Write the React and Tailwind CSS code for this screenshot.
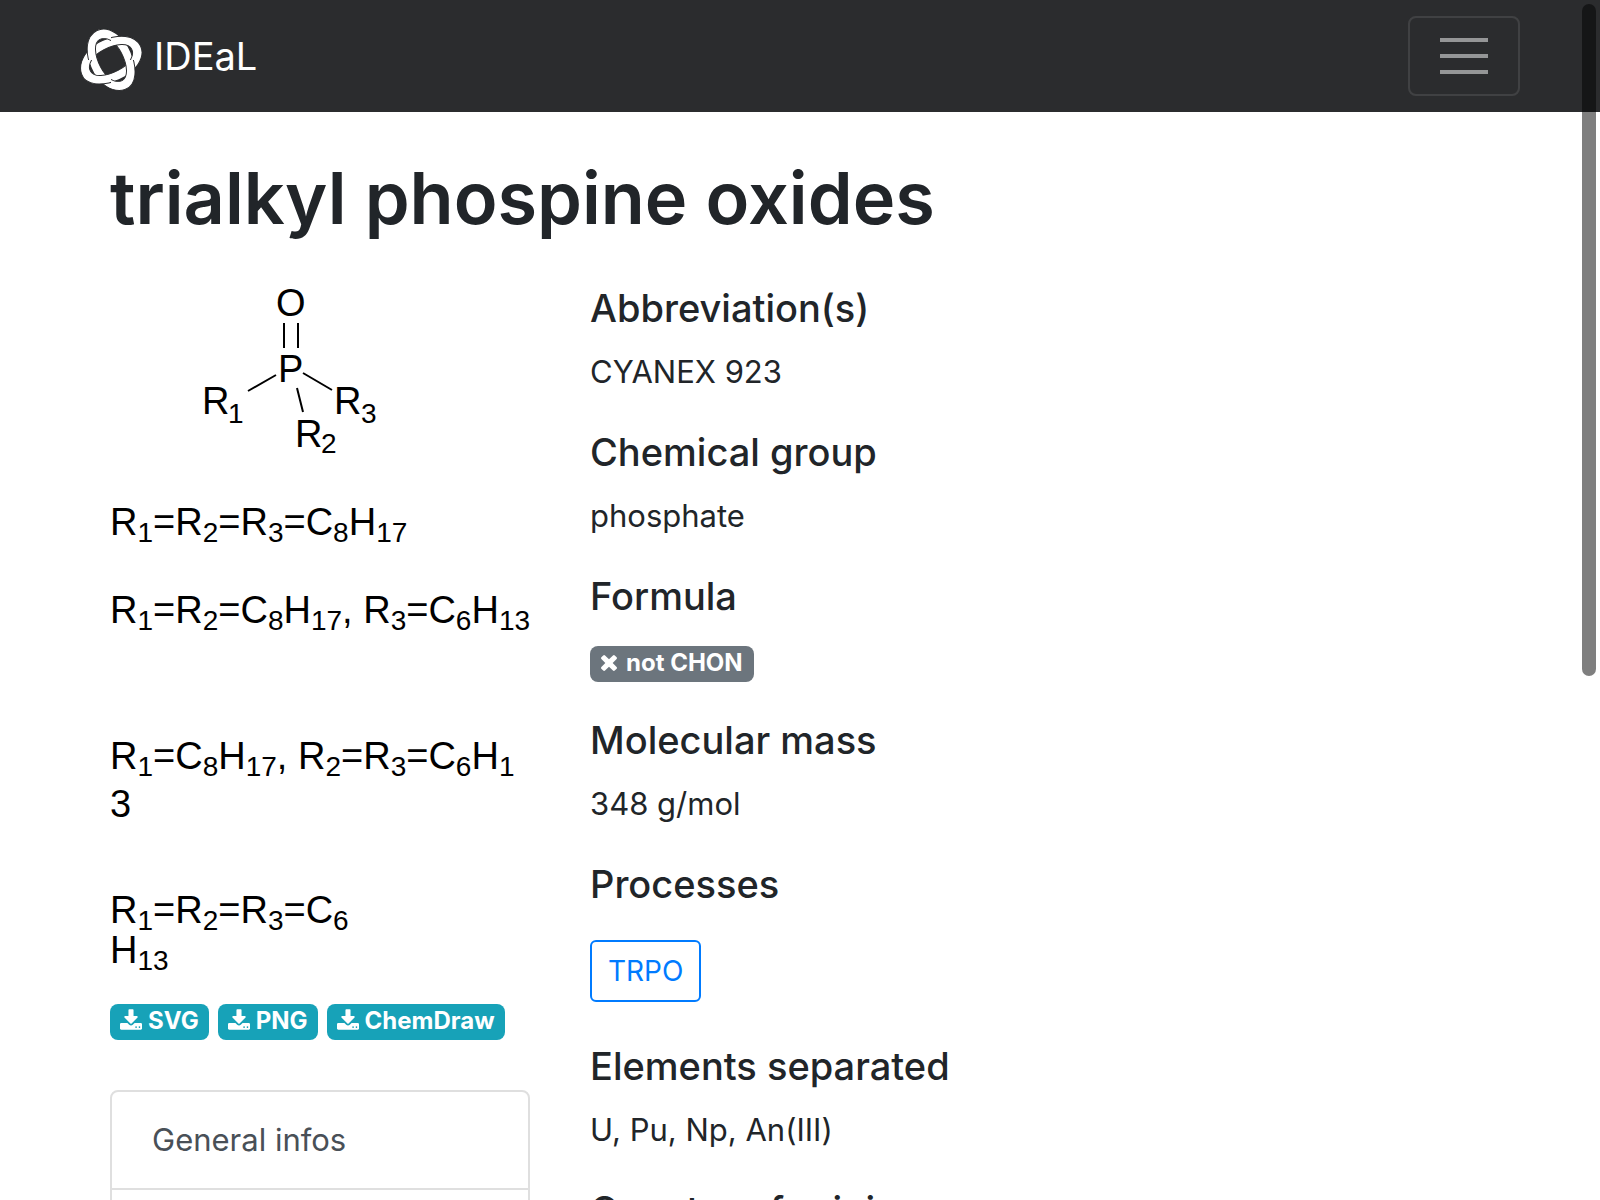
import React from "react";

const RING =
  "M-6-101C34-104 66-52 66 0S46 104 6 101S-66 52-66 0S-46-98-6-101Z" +
  "M-8-72C-30-70-42-34-38 8S-14 74 8 72S42 34 38-8S14-74-8-72Z";

function Logo() {
  return (
    <svg viewBox="-96 -99 192 198" className="mt-2 h-16 w-[62px]" aria-hidden="true">
      <defs>
        <clipPath id="weave">
          <rect x="-100" y="-100" width="100" height="100" />
          <rect x="0" y="0" width="100" height="100" />
        </clipPath>
      </defs>
      <g fill="#fff" stroke="#2b2c2e" strokeWidth="3" fillRule="evenodd">
        <path d={RING} transform="rotate(-22)" />
        <path d={RING} transform="rotate(68)" />
        <g clipPath="url(#weave)">
          <path d={RING} transform="rotate(-22)" />
        </g>
      </g>
    </svg>
  );
}

function DownloadIcon() {
  return (
    <svg viewBox="0 0 1664 1536" className="mb-[3px] h-[21px] w-[22px] shrink-0" fill="currentColor" aria-hidden="true">
      <path
        transform="matrix(1 0 0 -1 0 1536)"
        d="M1280 192q0 26 -19 45t-45 19t-45 -19t-19 -45t19 -45t45 -19t45 19t19 45zM1536 192q0 26 -19 45t-45 19t-45 -19t-19 -45t19 -45t45 -19t45 19t19 45zM1664 416v-320q0 -40 -28 -68t-68 -28h-1472q-40 0 -68 28t-28 68v320q0 40 28 68t68 28h465l135 -136q58 -56 136 -56t136 56l136 136h464q40 0 68 -28t28 -68zM1339 985q17 -41 -14 -70l-448 -448q-18 -19 -45 -19t-45 19l-448 448q-31 29 -14 70q17 39 59 39h256v448q0 26 19 45t45 19h256q26 0 45 -19t19 -45v-448h256q42 0 59 -39z"
      />
    </svg>
  );
}

function TimesIcon() {
  return (
    <svg viewBox="110 -18 1188 1188" className="h-4 w-4 shrink-0" fill="currentColor" aria-hidden="true">
      <path
        transform="matrix(1 0 0 -1 0 1152)"
        d="M1298 214q0 -40 -28 -68l-136 -136q-28 -28 -68 -28t-68 28l-294 294l-294 -294q-28 -28 -68 -28t-68 28l-136 136q-28 28 -28 68t28 68l294 294l-294 294q-28 28 -28 68t28 68l136 136q28 28 68 28t68 -28l294 -294l294 294q28 28 68 28t68 -28l136 -136q28 -28 28 -68t-28 -68l-294 -294l294 -294q28 -28 28 -68z"
      />
    </svg>
  );
}

function Molecule() {
  return (
    <svg viewBox="0 0 420 184" className="block w-full overflow-visible" role="img" aria-label="Structure of a trialkyl phosphine oxide">
      <g fontFamily="'Liberation Sans', Arial, sans-serif" fontSize="38" fill="#000">
        <text x="166" y="32">O</text>
        <text x="168" y="98">P</text>
        <text x="92" y="130">R</text>
        <text x="185" y="163">R</text>
        <text x="224" y="130">R</text>
        <g fontSize="28">
          <text x="118" y="139">1</text>
          <text x="211" y="169">2</text>
          <text x="251" y="139">3</text>
        </g>
      </g>
      <g stroke="#000" strokeWidth="2" fill="none">
        <path d="M174 39V64M188 39V64" />
        <path d="M138 107L166 91M193 89L222 106M187 104L193 128" />
      </g>
    </svg>
  );
}

/* Digits after an underscore are set as subscripts. */
function Chem({ text }) {
  return text.split(/(_\d+)/).map((part, i) =>
    part.startsWith("_") ? (
      <sub key={i} className="static align-[-7px] text-[28px] leading-[0px]">
        {part.slice(1)}
      </sub>
    ) : (
      <React.Fragment key={i}>{part}</React.Fragment>
    )
  );
}

function DownloadBadge({ children }) {
  return (
    <a href="#download" className="flex h-9 items-center gap-[6px] rounded-lg bg-[#17a2b8] px-[10px] pb-[2px] text-[24px] leading-6 font-bold text-white">
      <DownloadIcon />
      {children}
    </a>
  );
}

function Section({ title, children }) {
  return (
    <section className="mb-8">
      <h2 className="mb-4 text-[38px] leading-[48px] font-medium">{title}</h2>
      <div className="text-[31px] leading-[48px]">{children}</div>
    </section>
  );
}

export default function App() {
  return (
    <div className="h-screen overflow-hidden bg-white font-['Inter','Liberation_Sans',sans-serif] text-[#212529]">
      <header className="bg-[#2b2c2e]">
        <nav className="mx-auto flex h-28 max-w-[1440px] items-center justify-between">
          <a href="#home" className="flex items-center gap-3 text-white">
            <Logo />
            <span className="text-[38px] leading-[48px]">IDEaL</span>
          </a>
          <button type="button" aria-label="Toggle navigation" className="flex h-20 w-28 flex-col items-center justify-center gap-3 rounded-lg border-2 border-white/10">
            <span className="h-1 w-12 bg-white/50" />
            <span className="h-1 w-12 bg-white/50" />
            <span className="h-1 w-12 bg-white/50" />
          </button>
        </nav>
      </header>

      <main className="mx-auto max-w-[1440px] px-[30px] pt-[38px]">
        <h1 className="mb-[38px] text-[72px] leading-[96px] font-semibold">trialkyl phospine oxides</h1>
        <div className="grid grid-cols-3 gap-[60px]">
          <div>
            <Molecule />
            <div className="pt-[34px] font-['Liberation_Sans',Arial,sans-serif] text-[38px] leading-[40px] whitespace-nowrap text-black">
              <p className="mb-12"><Chem text="R_1=R_2=R_3=C_8H_17" /></p>
              <p className="mb-[106px]"><Chem text="R_1=R_2=C_8H_17, R_3=C_6H_13" /></p>
              <p className="mb-2"><Chem text="R_1=C_8H_17, R_2=R_3=C_6H_1" /></p>
              <p className="mb-[66px]">3</p>
              <p><Chem text="R_1=R_2=R_3=C_6" /></p>
              <p><Chem text="H_13" /></p>
            </div>
            <div className="mt-[34px] flex gap-[9px]">
              <DownloadBadge>SVG</DownloadBadge>
              <DownloadBadge>PNG</DownloadBadge>
              <DownloadBadge>ChemDraw</DownloadBadge>
            </div>
            <nav className="mt-[50px] h-60 rounded-t-lg border-2 border-[#dfdfdf] text-[31px] leading-[48px] text-[#495057]">
              <a href="#general" className="block border-b-2 border-[#dfdfdf] px-10 py-6">General infos</a>
            </nav>
          </div>

          <div className="col-span-2">
            <Section title="Abbreviation(s)">CYANEX 923</Section>
            <Section title="Chemical group">phosphate</Section>
            <Section title="Formula">
              <div className="flex h-12 items-end pb-[2px]">
                <span className="flex h-9 items-center gap-[9px] rounded-lg bg-[#6c757d] px-[11px] pb-[2px] text-[24px] leading-6 font-bold text-white">
                  <TimesIcon />
                  not CHON
                </span>
              </div>
            </Section>
            <Section title="Molecular mass">348 g/mol</Section>
            <Section title="Processes">
              <div className="flex pt-4 pb-2">
                <a href="#trpo" className="rounded-md border-2 border-[#007bff] px-4 py-2 text-[28px] leading-[42px] text-[#007bff]">TRPO</a>
              </div>
            </Section>
            <Section title="Elements separated">U, Pu, Np, An(III)</Section>
            <Section title="Country of origin">China</Section>
          </div>
        </div>
      </main>

      <div className="fixed top-1 right-1 h-[672px] w-[14px] rounded-full bg-black/50" aria-hidden="true" />
    </div>
  );
}
